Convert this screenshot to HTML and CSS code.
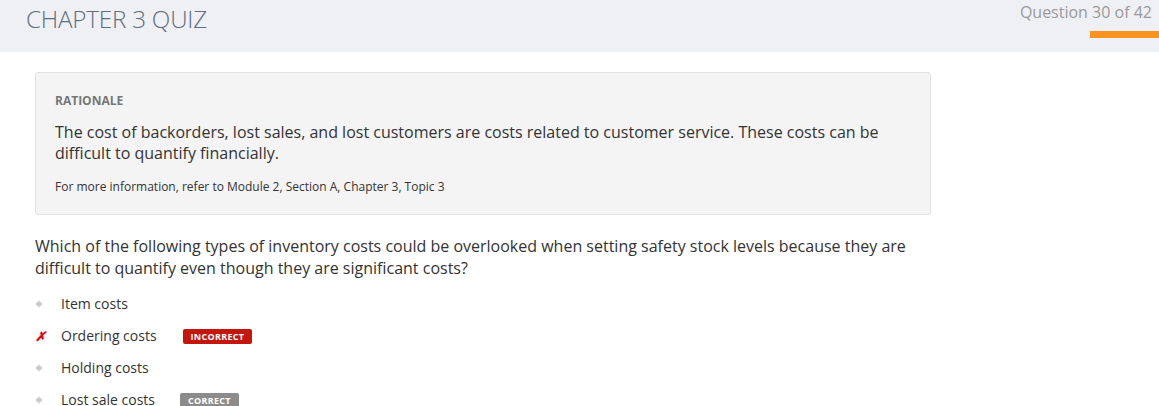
FILE: index.html
```html
<!DOCTYPE html>
<html>
<head>
<meta charset="utf-8">
<link rel="stylesheet" href="styles.css">
</head>
<body>
<header class="topbar">
  <h1 class="title">CHAPTER 3 QUIZ</h1>
  <div class="progress">
    <div class="progress-label">Question 30 of 42</div>
    <div class="progress-bar"></div>
  </div>
</header>
<main class="content">
  <section class="rationale">
    <div class="rationale-head">RATIONALE</div>
    <p class="rationale-text">The cost of backorders, lost sales, and lost customers are costs related to customer service. These costs can be difficult to quantify financially.</p>
    <p class="rationale-ref">For more information, refer to Module 2, Section A, Chapter 3, Topic 3</p>
  </section>
  <p class="question">Which of the following types of inventory costs could be overlooked when setting safety stock levels because they are difficult to quantify even though they are significant costs?</p>
  <ul class="options">
    <li class="option"><span class="mark dot"></span><span class="opt-text">Item costs</span></li>
    <li class="option"><span class="mark cross">✗</span><span class="opt-text">Ordering costs</span><span class="badge badge-wrong">INCORRECT</span></li>
    <li class="option"><span class="mark dot"></span><span class="opt-text">Holding costs</span></li>
    <li class="option"><span class="mark dot"></span><span class="opt-text">Lost sale costs</span><span class="badge badge-right">CORRECT</span></li>
  </ul>
</main>
</body>
</html>
```
FILE: styles.css
```css
* { box-sizing: border-box; }
html, body { margin: 0; padding: 0; }
body {
  font-family: "Open Sans", "Liberation Sans", sans-serif;
  color: #333;
  background: #fff;
  overflow: hidden;
}
.topbar {
  height: 52px;
  background: #eff0f4;
  display: flex;
  justify-content: space-between;
  align-items: flex-start;
}
.title {
  margin: 0;
  padding: 4px 0 0 26px;
  font-weight: 300;
  font-size: 24.2px;
  line-height: 30px;
  color: #5d6e80;
  letter-spacing: -0.2px;
}
.progress {
  display: flex;
  flex-direction: column;
  align-items: flex-end;
  padding-top: 1px;
}
.progress-label {
  font-size: 16px;
  line-height: 22px;
  color: #9a9a9a;
  padding-right: 7px;
}
.progress-bar {
  margin-top: 8px;
  width: 69px;
  height: 7px;
  background: #f7931e;
}
.content {
  padding: 20px 0 0 35px;
  width: 931px;
}
.rationale {
  background: #f4f4f4;
  border: 1px solid #e2e2e2;
  border-radius: 3px;
  padding: 20px 19px 17px 19px;
  height: 143px;
}
.rationale-head {
  font-size: 12px;
  font-weight: 700;
  color: #777;
  line-height: 16px;
}
.rationale-text {
  margin: 13px 0 0 0;
  font-size: 16px;
  line-height: 21px;
  color: #333;
  padding-right: 30px;
}
.rationale-ref {
  margin: 15px 0 0 0;
  font-size: 12px;
  line-height: 16px;
  color: #333;
}
.question {
  margin: 20px 0 0 0;
  font-size: 16px;
  line-height: 22px;
  color: #333;
  padding-right: 15px;
}
.options {
  list-style: none;
  margin: 9px 0 0 0;
  padding: 0;
}
.option {
  display: flex;
  align-items: center;
  height: 32px;
  font-size: 14px;
  color: #333;
}
.mark {
  width: 26px;
  display: inline-flex;
  align-items: center;
  justify-content: flex-start;
}
.dot::before {
  content: "";
  width: 4px;
  height: 4px;
  margin-left: 2px;
  background: #c8c8c8;
  transform: rotate(45deg);
  box-shadow: 0 0 0 1px #e6e6e6;
}
.cross {
  color: #e8000b;
  font-weight: 700;
  font-size: 13px;
  font-style: italic;
}
.opt-text { line-height: 20px; }
.badge {
  display: inline-block;
  font-size: 9px;
  font-weight: 700;
  letter-spacing: 0.3px;
  color: #fff;
  line-height: 15px;
  height: 15px;
  padding: 0 8px;
  border-radius: 2px;
  margin-left: 26px;
}
.badge-wrong { background: #c4170c; }
.badge-right { background: #8c8c8c; margin-left: 25px; }
```
